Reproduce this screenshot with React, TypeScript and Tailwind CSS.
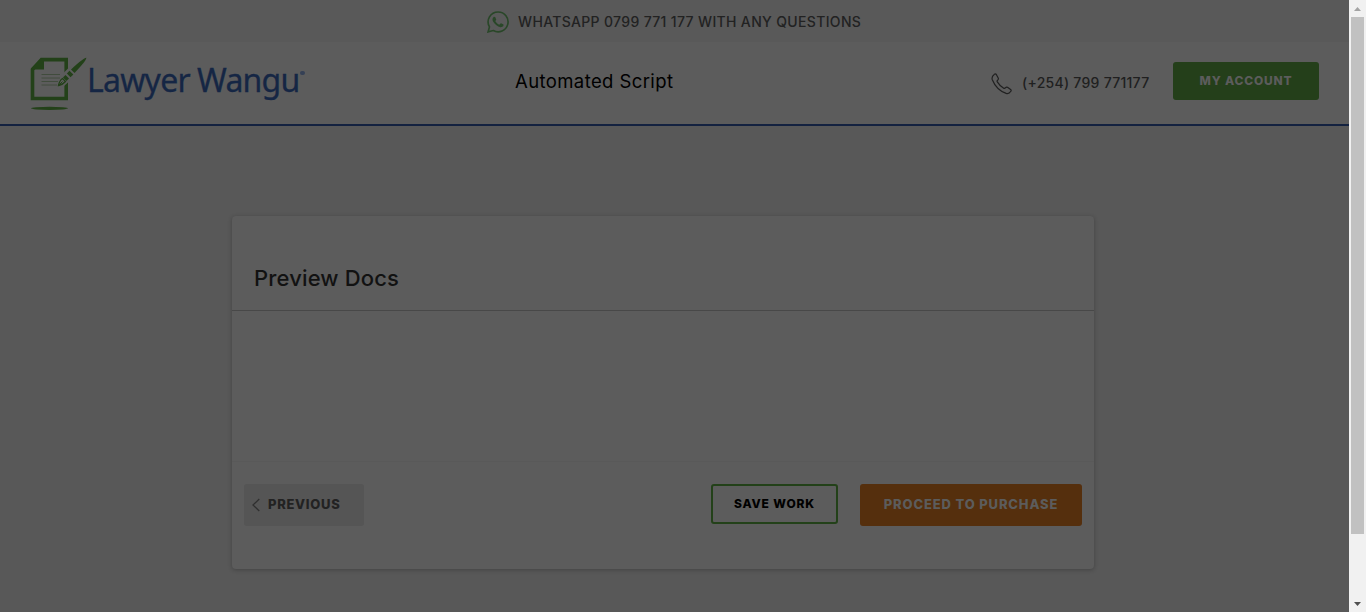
import React from "react";

function Logo() {
  return (
    <div className="flex h-[56px] w-[290px] items-start">
      <svg width="58" height="56" viewBox="0 0 58 56" className="shrink-0" aria-hidden="true">
        <path d="M11.500 2.600H36.200V41.500H2.500V12.500Z" fill="none" stroke="#234119" strokeWidth="3.600" />
        <path d="M11 1.500H14V12.500H1.500V11Z" fill="#234119" />
        <path d="M11.500 17.500H30M11.500 21H30M11.500 24.500H28M11.500 28H27" stroke="#3e4b3a" strokeWidth="0.900" />
        <path d="M33.500 16L40 9.500L44 14V20L34 29Z" fill="#5c5c5c" />
        <path d="M56.300 0.800Q54 0.500 41 12.500L44.500 16Q56.500 3.500 56.300 0.800Z" fill="#234119" />
        <path d="M39.500 13.800L43.300 17.600L40.500 20.200L36.900 16.500Z" fill="#234119" />
        <path d="M35.500 18L39 21.500L36.500 24L33 20.500Z" fill="#234119" />
        <path d="M32.500 21.500L35.500 24.500Q33 27.500 28.500 28.500Q29.500 23.500 32.500 21.500Z" fill="#5c5c5c" stroke="#234119" strokeWidth="1.300" />
        <path d="M28 29L32.500 24.500" stroke="#234119" strokeWidth="1" />
        <ellipse cx="19.500" cy="51.300" rx="18.500" ry="1.600" fill="#234119" />
      </svg>
      <span className="-ml-px whitespace-nowrap font-['Noto_Sans',sans-serif] text-[32px] leading-[46px] tracking-[-0.75px] text-[#152644] [word-spacing:-0.5px] [-webkit-text-stroke:0.3px_#152644]">Lawyer Wangu</span>
      <span className="mt-[14px] h-[4px] w-[5px] rounded-full bg-[#354055]" />
    </div>
  );
}

function WhatsAppIcon() {
  return (
    <svg width="22" height="22" viewBox="0 0 24 24" fill="#294728" className="mt-px" aria-hidden="true">
      <path d="M17.472 14.382c-.297-.149-1.758-.867-2.030-.967-.273-.099-.471-.148-.670.150-.197.297-.767.966-.940 1.164-.173.199-.347.223-.644.075-.297-.150-1.255-.463-2.390-1.475-.883-.788-1.480-1.761-1.653-2.059-.173-.297-.018-.458.130-.606.134-.133.298-.347.446-.520.149-.174.198-.298.298-.497.099-.198.050-.371-.025-.520-.075-.149-.669-1.612-.916-2.207-.242-.579-.487-.500-.669-.510-.173-.008-.371-.010-.570-.010-.198 0-.520.074-.792.372-.272.297-1.040 1.016-1.040 2.479 0 1.462 1.065 2.875 1.213 3.074.149.198 2.096 3.200 5.077 4.487.709.306 1.262.489 1.694.625.712.227 1.360.195 1.871.118.571-.085 1.758-.719 2.006-1.413.248-.694.248-1.289.173-1.413-.074-.124-.272-.198-.570-.347" />
      <path d="M12.050 1.100A10.800 10.800 0 0 0 2.700 17.300L1.200 22.800L6.850 21.300A10.800 10.800 0 1 0 12.050 1.100Z" fill="none" stroke="#294728" strokeWidth="1.800" />
    </svg>
  );
}

function PhoneIcon() {
  return (
    <svg width="22" height="22" viewBox="0 0 22 22" fill="none" stroke="#202020" strokeWidth="1.200" strokeLinejoin="round" className="mt-px" aria-hidden="true">
      <path d="M3.200 1.400Q4.400.4 5.300 1.500L7.200 5Q7.800 6.100 6.800 7Q5.700 7.900 6.300 8.900Q8.600 12.700 12.700 15.200Q13.700 15.700 14.600 14.700Q15.500 13.700 16.500 14.300L19.600 16.400Q20.600 17.300 19.800 18.300Q18 21.200 15.200 20.400Q5.500 17 1.300 6.700Q.300 3.600 3.200 1.400Z" />
    </svg>
  );
}

function Scrollbar() {
  return (
    <div className="flex w-[17px] shrink-0 flex-col items-center bg-[#f1f1f1]">
      <div className="flex h-[17px] items-center justify-center">
        <svg width="7" height="4" viewBox="0 0 7 4" aria-hidden="true"><path d="M0 4L3.500 0L7 4Z" fill="#a3a3a3" /></svg>
      </div>
      <div className="h-[517px] w-[13px] bg-[#c1c1c1]" />
      <div className="mt-auto flex h-[17px] items-center justify-center">
        <svg width="7" height="4" viewBox="0 0 7 4" aria-hidden="true"><path d="M0 0H7L3.500 4Z" fill="#505050" /></svg>
      </div>
    </div>
  );
}

export default function App() {
  return (
    <div className="flex h-[612px] w-[1366px] overflow-hidden font-['Inter',sans-serif]">
      <div className="flex w-[1349px] flex-col bg-[#585858]">
        <div className="flex h-[42px] items-center bg-[#595959] pl-[487px]">
          <WhatsAppIcon />
          <span className="ml-[9px] whitespace-nowrap text-[14px] font-medium tracking-[0.34px] text-[#222222]">WHATSAPP 0799 771 177 WITH ANY QUESTIONS</span>
        </div>
        <header className="flex h-[84px] items-start border-b-2 border-[#142240] bg-[#5c5c5c] pl-[30px] pt-[15px]">
          <Logo />
          <div className="ml-[195px] mt-[10px] w-[476px] whitespace-nowrap text-[18.5px] leading-[28px] tracking-[0.4px] text-black">Automated Script</div>
          <div className="mt-[15px] flex w-[182px] items-start">
            <PhoneIcon />
            <span className="ml-[9px] whitespace-nowrap text-[14px] font-medium leading-[22px] tracking-[0.27px] text-[#202020]">(+254) 799 771177</span>
          </div>
          <button className="mt-[5px] flex h-[38px] w-[146px] items-center justify-center rounded-[3px] bg-[#243f1a] text-[12px] font-extrabold tracking-[0.8px] text-[#5c5c5c]">MY ACCOUNT</button>
        </header>
        <main className="flex-1 pl-[232px] pt-[90px]">
          <section className="flex h-[353px] w-[862px] flex-col rounded-[4px] bg-[#5c5c5c] shadow-[0_1px_4px_rgba(0,0,0,0.25)]">
            <div className="h-[95px] border-b border-[#484848] pl-[22px] pt-[45px]">
              <h1 className="whitespace-nowrap text-[22px] font-medium leading-[34px] tracking-[0.15px] text-[#121212]">Preview Docs</h1>
            </div>
            <div className="h-[151px] border-b border-[#595959]" />
            <div className="flex items-start px-[12px] pt-[22px]">
              <button className="flex h-[42px] w-[120px] items-center rounded-[3px] bg-[#555555] pl-[8px] text-[13px] font-extrabold text-[#222222]">
                <svg width="8" height="14" viewBox="0 0 8 14" fill="none" stroke="#303030" strokeWidth="1.300" aria-hidden="true"><path d="M7.300 1L1 7L7.300 13" /></svg>
                <span className="ml-[8px] tracking-[0.7px]">PREVIOUS</span>
              </button>
              <button className="ml-auto h-[40px] w-[127px] rounded-[3px] border-2 border-[#234119] text-[12px] font-extrabold tracking-[0.85px] text-black">SAVE WORK</button>
              <button className="ml-[22px] h-[42px] w-[222px] rounded-[3px] bg-[#552f0d] text-[13px] font-extrabold tracking-[0.85px] text-[#5c5c5c]">PROCEED TO PURCHASE</button>
            </div>
          </section>
        </main>
      </div>
      <Scrollbar />
    </div>
  );
}
